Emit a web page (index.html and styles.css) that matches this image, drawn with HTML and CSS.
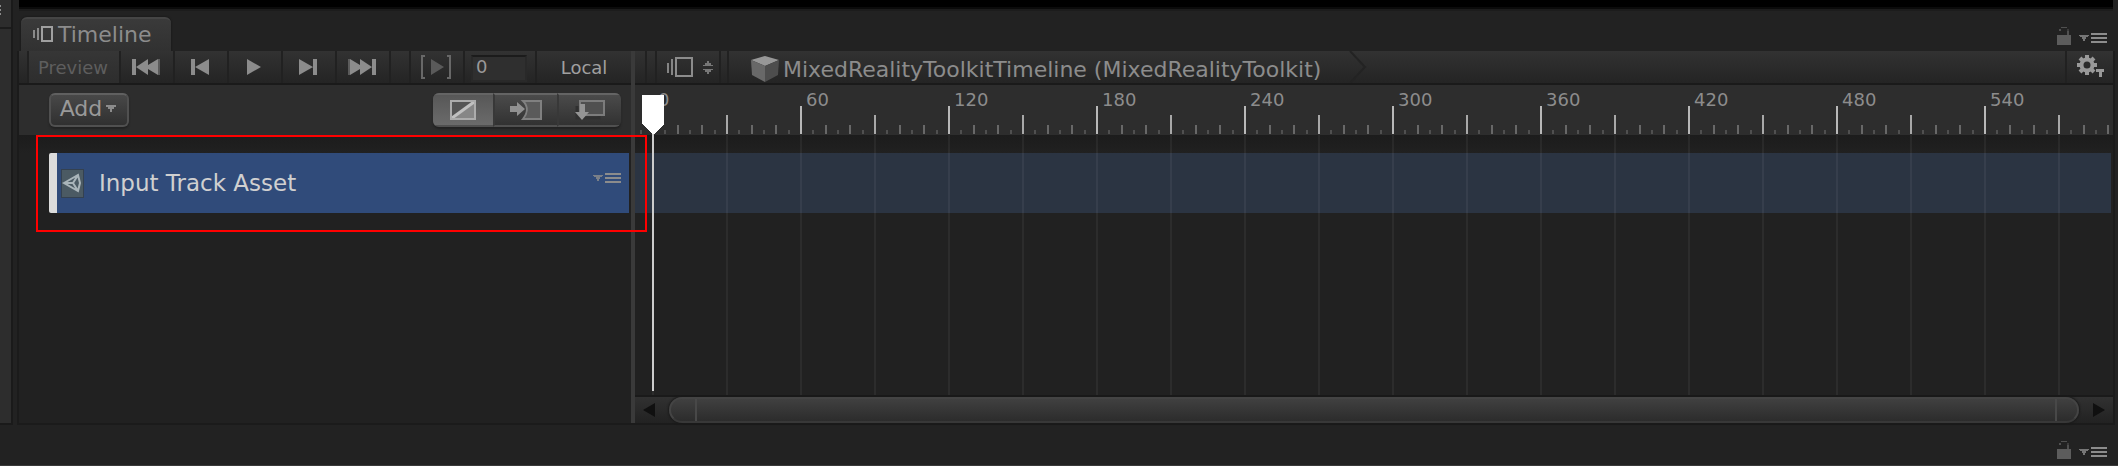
FILE: index.html
```html
<!DOCTYPE html>
<html lang="en">
<head>
<meta charset="utf-8">
<title>Timeline</title>
<link rel="stylesheet" href="styles.css">
</head>
<body>
<svg class="defs" aria-hidden="true">
  <symbol id="lock" viewBox="0 0 14 18"><path d="M0 8h14v10H0z" fill="#5c5c5c"/><path d="M10 8h2V4h-2zM2 2h2v2H2zM4 0h6v1H4z" fill="#505050"/><path d="M10 2h2v2h-2z" fill="#3c3c3c"/></symbol>
  <symbol id="menu" viewBox="0 0 28 10"><path d="M0 2h10v1H9v1H7v2H6v2H4V6H3V4H1V3H0z" opacity=".8"/><path d="M12 0h16v2H12zM12 4h16v2H12zM12 8h16v2H12z"/></symbol>
</svg>
<div class="workspace">
  <aside class="side-dock">
    <div class="side-head"><i></i><i></i><i></i></div>
    <div class="side-body"></div>
  </aside>
  <main class="dock">
    <div class="viewport-edge"></div>
    <header class="tab-bar">
      <button class="tab">
        <svg width="20" height="16" shape-rendering="crispEdges"><path d="M0 4h2v8H0zM4 2h2v12H4z" fill="#8a8a8a"/><path d="M9 1h10v14H9z" fill="none" stroke="#a0a0a0" stroke-width="2"/></svg>
        Timeline
      </button>
      <div class="window-actions">
        <button class="plain" aria-label="Lock"><svg width="14" height="18" shape-rendering="crispEdges"><use href="#lock"/></svg></button>
        <button class="plain" aria-label="Window menu"><svg width="28" height="10" shape-rendering="crispEdges"><use href="#menu"/></svg></button>
      </div>
    </header>
    <div class="panel">
      <section class="tracks">
        <div class="toolbar">
          <span class="gap-start"></span>
          <button class="tool preview">Preview</button>
          <button class="tool step" aria-label="Go to start"><svg width="28" height="16"><path d="M0 0h4v16H0zM4 8l12-8v6l10-6v16l-10-6v6z"/><path d="M26 0h2v16h-2z" opacity=".5"/></svg></button>
          <button class="tool step" aria-label="Previous frame"><svg width="18" height="16"><path d="M0 0h4v16H0zM4 8l14-8v16z"/></svg></button>
          <button class="tool step" aria-label="Play"><svg width="14" height="16"><path d="M0 0l14 8L0 16z"/></svg></button>
          <button class="tool step" aria-label="Next frame"><svg width="18" height="16"><path d="M14 0h4v16h-4zM14 8L0 0v16z"/></svg></button>
          <button class="tool step" aria-label="Go to end"><svg width="28" height="16"><path d="M24 0h4v16h-4zM24 8L12 0v6L2 0v16l10-6v6z"/><path d="M0 0h2v16H0z" opacity=".5"/></svg></button>
          <span class="gap-mid"></span>
          <button class="tool step" aria-label="Play range"><svg width="30" height="24"><path d="M4 1H1v22h3M26 1h3v22h-3" fill="none" stroke="#686868" stroke-width="2"/><path d="M10 4l13 8-13 8z" fill="#5a5a5a"/></svg></button>
          <span class="frame-cell"><input class="frame" type="text" value="0" aria-label="Current frame"></span>
          <button class="tool local">Local</button>
        </div>
        <div class="track-head">
          <button class="add">Add<svg width="10" height="7" shape-rendering="crispEdges"><path d="M0 0h10v2H8v2H6v3H4V4H2V2H0z"/></svg></button>
          <div class="modes">
            <button class="on" aria-label="Mix mode"><svg width="26" height="20"><path d="M1 1h24v18H1z" fill="#555"/><path d="M2 18L24 2v16z" fill="#868686"/><path d="M2 18L24 2" stroke="#c0c0c0" stroke-width="3"/><path d="M1 1h24v18H1z" fill="none" stroke="#acacac" stroke-width="2"/></svg></button>
            <button aria-label="Ripple mode"><svg width="32" height="20"><path d="M0 6h7V2l8 7-8 7v-4H0z" fill="#909090"/><path d="M13 1h18v18H13c4-5 6-12 0-18z" fill="#5a5a5a" stroke="#808080" stroke-width="2"/></svg></button>
            <button aria-label="Replace mode"><svg width="30" height="20"><path d="M2 6v12h22v-3" fill="none" stroke="#303030" stroke-width="3"/><path d="M5 1h24v14H5z" fill="#505050" stroke="#7c7c7c" stroke-width="2"/><path d="M5 4h5v8h4l-7 8-7-8h5z" fill="#949494"/></svg></button>
          </div>
        </div>
        <div class="track-list">
          <div class="track">
            <svg class="asset" width="23" height="29"><path d="M0 0h23v29H0z" fill="#344150"/><path d="M1 1h21v27H1z" fill="#4b5a63"/><path d="M3 14L17 6l2 8-2 8zM3 14h9l5-8M12 14l5 8" fill="none" stroke="#a9b4b9" stroke-width="2"/></svg>
            <span class="track-name">Input Track Asset</span>
            <button class="plain" aria-label="Track menu"><svg width="28" height="10" shape-rendering="crispEdges"><use href="#menu"/></svg></button>
          </div>
          <div class="highlight"></div>
        </div>
      </section>
      <div class="splitter"></div>
      <section class="sequence">
        <div class="toolbar">
          <span class="notch"></span><span class="notch"></span>
          <button class="tool selector" aria-label="Select timeline"><svg width="46" height="20" shape-rendering="crispEdges"><path d="M0 6h2v10H0zM4 2h2v16H4z" fill="#858585"/><path d="M9 1h16v18H9z" fill="none" stroke="#8c8c8c" stroke-width="2"/><path d="M36 9h10V8h-2V6h-2V4h-2v2h-2v2h-2zM36 12h10v1h-2v2h-2v2h-2v-2h-2v-2h-2z" fill="#777"/></svg></button>
          <span class="notch small"></span>
          <a class="crumb" href="#"><svg width="28" height="26"><path d="M0 4l14-4 14 4-14 6z" fill="#979797"/><path d="M0 4l14 6v16L1 19z" fill="#686868"/><path d="M28 4l-14 6v16l13-7z" fill="#4d4d4d"/></svg>MixedRealityToolkitTimeline (MixedRealityToolkit)</a>
          <svg class="chevron" width="18" height="32"><path d="M1 0l15 16L1 32" fill="none" stroke="#232323" stroke-width="2"/></svg>
          <button class="tool settings" aria-label="Settings"><svg width="28" height="24"><g fill="none" stroke="#999"><circle cx="10" cy="10" r="5.500" stroke-width="4"/><path d="M10 0v4M10 16v4M0 10h4M16 10h4M3 3l3 3M14 14l3 3M3 17l3-3M14 6l3-3" stroke-width="4"/></g><path d="M19 14h8v3h-2v5h-3v-5h-3z" fill="#999"/></svg></button>
        </div>
        <div class="ruler">
          <span>0</span><span>60</span><span>120</span><span>180</span><span>240</span><span>300</span><span>360</span><span>420</span><span>480</span><span>540</span>
        </div>
        <div class="lanes"><div class="lane"></div></div>
        <div class="scrollbar">
          <button class="plain" aria-label="Scroll left"><svg width="12" height="14"><path d="M0 7l12-7v14z" fill="#101010"/></svg></button>
          <div class="thumb"></div>
          <button class="plain" aria-label="Scroll right"><svg width="12" height="14"><path d="M12 7L0 0v14z" fill="#101010"/></svg></button>
        </div>
        <svg class="playhead" width="22" height="296" shape-rendering="crispEdges"><path d="M10 36h2v260h-2z" fill="#ccc"/><path d="M0 0h22v29L12 39h-2L0 29z" fill="#fff"/></svg>
      </section>
    </div>
  </main>
</div>
<footer class="lower-dock">
  <div class="window-actions">
    <button class="plain" aria-label="Lock lower panel"><svg width="14" height="18" shape-rendering="crispEdges"><use href="#lock"/></svg></button>
    <button class="plain" aria-label="Lower panel menu"><svg width="28" height="10" shape-rendering="crispEdges"><use href="#menu"/></svg></button>
  </div>
</footer>
</body>
</html>
```
FILE: styles.css
```css
* { box-sizing: border-box; }

body {
  margin: 0;
  min-height: 100vh;
  display: flex;
  flex-direction: column;
  background: #222;
  color: #8c8c8c;
  font-family: "DejaVu Sans", sans-serif;
  font-size: 22px;
  overflow: hidden;
}

svg { display: block; flex: none; fill: #8c8c8c; }
.defs { position: absolute; width: 0; height: 0; }

button {
  margin: 0;
  padding: 0;
  border: 0;
  background: none;
  color: inherit;
  font: inherit;
  display: flex;
  align-items: center;
  justify-content: center;
}

.workspace { flex: 1; display: flex; gap: 4px; }

.side-dock {
  width: 13px;
  display: flex;
  flex-direction: column;
  border-right: 2px solid #1a1a1a;
  border-bottom: 2px solid #1a1a1a;
  background: #2d2d2d;
}
.side-head {
  height: 29px;
  padding-top: 5px;
  border-bottom: 2px solid #1c1c1c;
  display: flex;
  flex-direction: column;
  gap: 2px;
}
.side-head i { width: 1px; height: 2px; background: #8c8c8c; }

.dock { flex: 1; min-width: 0; margin-right: 3px; display: flex; flex-direction: column; }
.viewport-edge {
  height: 11px;
  margin: 0 2px;
  background: linear-gradient(#000 7px, #0b0b0b 7px, #0b0b0b 9px, #1c1c1c 9px);
}
.tab-bar {
  height: 40px;
  padding-left: 4px;
  display: flex;
  align-items: flex-end;
  justify-content: space-between;
}
.tab {
  height: 34px;
  width: 150px;
  padding: 0 0 2px 12px;
  gap: 5px;
  justify-content: flex-start;
  border-top: 2px solid #454545;
  border-radius: 6px 6px 0 0;
  background: linear-gradient(#3a3a3a, #313131);
  box-shadow: 0 0 2px #111;
}
.window-actions {
  display: flex;
  align-items: flex-end;
  gap: 8px;
  padding: 0 8px 6px 0;
}
.window-actions .plain:last-child { padding-bottom: 2px; }

.panel {
  flex: 1;
  display: flex;
  border: solid #1b1b1b;
  border-width: 0 2px 2px;
}
.tracks { width: 612px; display: flex; flex-direction: column; }
.splitter { width: 4px; background: #3a3a3a; }
.sequence { flex: 1; min-width: 0; display: flex; flex-direction: column; position: relative; }

.toolbar {
  height: 34px;
  display: flex;
  border-bottom: 2px solid #1a1a1a;
  background: linear-gradient(#323232, #242424);
}
.tool, .gap-start, .gap-mid, .frame-cell, .notch { border-right: 2px solid #212121; }
.gap-start { width: 10px; }
.gap-mid { width: 20px; }
.preview {
  width: 92px;
  padding-right: 2px;
  font-size: 18px;
  color: #5e5e5e;
  background: linear-gradient(#363636, #2d2d2d);
}
.step { width: 54px; padding-right: 2px; }
.frame-cell { width: 72px; padding: 2px 0 0 6px; }
.frame {
  width: 56px;
  height: 27px;
  padding: 0 0 3px 3px;
  border: 2px solid #292929;
  border-top-color: #1b1b1b;
  background: #2f2f2f;
  color: #999;
  font: inherit;
  font-size: 18px;
}
.local { flex: 1; border: 0; font-size: 18px; color: #a0a0a0; }

.notch { width: 12px; }
.notch + .notch { width: 10px; }
.notch.small { width: 8px; }
.selector { width: 64px; padding-left: 4px; }
.crumb {
  display: flex;
  align-items: center;
  gap: 4px;
  padding: 4px 28px 0 22px;
  color: inherit;
  text-decoration: none;
  white-space: nowrap;
}
.settings { width: 48px; margin-left: auto; padding-left: 2px; border-right: 0; border-left: 2px solid #212121; }

.track-head {
  height: 50px;
  padding: 8px 10px 8px 30px;
  display: flex;
  justify-content: space-between;
  background: #2d2d2d;
}
.add {
  width: 80px;
  padding: 0 2px 3px 0;
  gap: 4px;
  border: 2px solid #505050;
  border-top-color: #606060;
  border-radius: 6px;
  background: linear-gradient(#484848, #303030);
  box-shadow: 0 2px 2px #222;
  color: #999;
}
.modes {
  width: 188px;
  display: flex;
  border-radius: 6px;
  overflow: hidden;
  background: linear-gradient(#4c4c4c, #303030);
  box-shadow: 0 2px 2px #222;
}
.modes button { flex: 1; border: solid #505050; border-width: 2px 0; border-top-color: #646464; }
.modes button + button { border-left: 2px solid #383838; }
.modes .on { flex: 0 0 60px; background: linear-gradient(#575757, #6b6b6b); }

.track-list, .lanes { flex: 1; padding-top: 18px; background: linear-gradient(#1c1c1c, #1f1f1f 12px, #212121 18px); }
.track-list { position: relative; padding-left: 30px; padding-right: 2px; }
.track {
  height: 60px;
  padding: 0 8px 0 4px;
  display: flex;
  align-items: center;
  border-left: 8px solid #dcdcdc;
  border-radius: 2px 0 0 2px;
  background: #304b7a;
  color: #d0d0d0;
}
.track-name { flex: 1; padding-left: 15px; font-size: 23px; }
.track .plain { padding-bottom: 10px; }
.highlight {
  position: absolute;
  top: 0;
  left: 17px;
  right: -16px;
  height: 97px;
  border: 2px solid #f00;
  z-index: 2;
}

.ruler {
  height: 50px;
  padding-left: 17px;
  display: flex;
  overflow: hidden;
  font-size: 18px;
  line-height: 22px;
  background:
    linear-gradient(to right, #b8b8b8 2px, transparent 2px) 17px 21px / 148px 28px repeat-x,
    linear-gradient(to right, #a8a8a8 2px, transparent 2px) 17px 30px / 74px 19px repeat-x,
    linear-gradient(to right, transparent 25px, #686868 25px, #686868 27px, transparent 27px, transparent 49px, #686868 49px, #686868 51px, transparent 51px) 17px 40px / 74px 9px repeat-x,
    linear-gradient(to right, transparent 12px, #505050 12px, #505050 14px, transparent 14px, transparent 37px, #505050 37px, #505050 39px, transparent 39px, transparent 62px, #505050 62px, #505050 64px, transparent 64px) 17px 45px / 74px 4px repeat-x,
    #2d2d2d;
}
.ruler span { flex: 0 0 148px; padding: 4px 0 0 6px; }

.lanes { position: relative; padding-right: 2px; }
.lanes::after {
  content: "";
  position: absolute;
  inset: 0;
  background: linear-gradient(to right, rgba(255, 255, 255, 0.05) 2px, transparent 2px) 17px 0 / 74px 100% repeat-x;
}
.lane { height: 60px; background: #2b3442; }

.scrollbar {
  height: 28px;
  padding: 0 8px;
  display: flex;
  align-items: stretch;
  gap: 14px;
  border-top: 2px solid #1a1a1a;
  background: linear-gradient(#313131, #222);
}
.thumb {
  flex: 1;
  border: 2px solid #444;
  border-bottom-color: #383838;
  border-radius: 13px;
  background:
    linear-gradient(#484848, #484848) 24px 0 / 2px 100% no-repeat,
    linear-gradient(#484848, #484848) right 20px top 0 / 2px 100% no-repeat,
    linear-gradient(#404040, #2c2c2c);
  box-shadow: 0 0 2px 1px #1a1a1a;
}

.playhead { position: absolute; top: 44px; left: 7px; z-index: 3; }

.lower-dock {
  height: 41px;
  padding-right: 3px;
  display: flex;
  align-items: flex-end;
  justify-content: flex-end;
  border-bottom: 1px solid #3a3a3a;
}
```
